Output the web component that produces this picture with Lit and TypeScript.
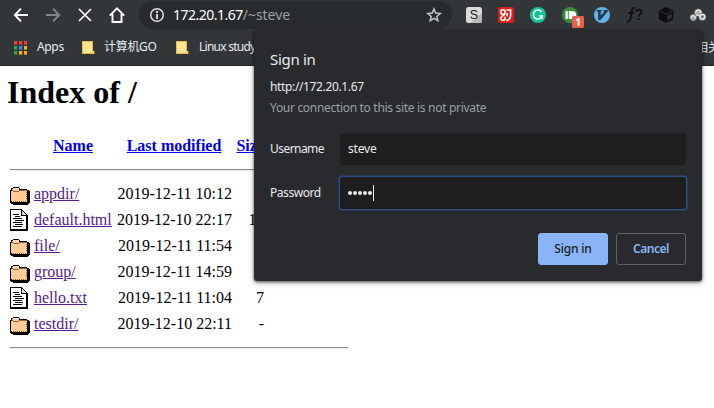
import { LitElement, html, css, svg } from "lit";
import { customElement } from "lit/decorators.js";

type Entry = { dir: boolean; name: string; date: string; size: string };

const ENTRIES: Entry[] = [
  { dir: true, name: "appdir/", date: "2019-12-11 10:12", size: "-" },
  { dir: false, name: "default.html", date: "2019-12-10 22:17", size: "11" },
  { dir: true, name: "file/", date: "2019-12-11 11:54", size: "-" },
  { dir: true, name: "group/", date: "2019-12-11 14:59", size: "-" },
  { dir: false, name: "hello.txt", date: "2019-12-11 11:04", size: "7" },
  { dir: true, name: "testdir/", date: "2019-12-10 22:11", size: "-" },
];

const UI = css`"Noto Sans", "Noto Sans CJK SC", sans-serif`;

@customElement("browser-toolbar")
class BrowserToolbar extends LitElement {
  static styles = css`
    :host { display: flex; align-items: center; height: 30px; background: #323639; font-family: ${UI}; }
    svg { display: block; flex: none; }
    .nav { display: flex; gap: 16px; margin-left: 13px; }
    .omnibox { display: flex; align-items: center; width: 313px; height: 28px; margin-left: 14px; border-radius: 14px;
      background: #282b2e; box-sizing: border-box; padding: 0 10px 0 10px; flex: none; color: #9aa0a6; font-size: 14px; }
    .url { flex: 1; margin-left: 8px; line-height: 28px; letter-spacing: -0.5px; white-space: nowrap; }
    .host { color: #fff; }
    .path { letter-spacing: -0.05px; }
    .ext { display: flex; gap: 16px; margin-left: 14px; }
  `;
  render() {
    return html`
      <div class="nav">
        <svg width="16" height="16" viewBox="0 0 16 16" fill="none" stroke="#fff" stroke-width="1.9"><path d="M15 8H2M8 1.6 1.8 8 8 14.4"/></svg>
        <svg width="16" height="16" viewBox="0 0 16 16" fill="none" stroke="#85888a" stroke-width="1.9"><path d="M1 8h13M8 1.6 14.2 8 8 14.4"/></svg>
        <svg width="16" height="16" viewBox="0 0 16 16" fill="none" stroke="#fff" stroke-width="1.7"><path d="m2 2 12 12M14 2 2 14"/></svg>
        <svg width="16" height="16" viewBox="0 0 16 16" fill="none" stroke="#fff" stroke-width="1.9"><path d="M.8 8.6 8 1.4l7.2 7.2M3.5 7v8h9V7"/></svg>
      </div>
      <div class="omnibox">
        <svg width="16" height="16" viewBox="0 0 16 16"><circle cx="8" cy="8" r="6.3" fill="none" stroke="#dfe1e3" stroke-width="1.5"/><path d="M7.1 7h1.8v5H7.1zM7.1 4h1.8v1.9H7.1z" fill="#e8eaed"/></svg>
        <div class="url"><span class="host">172.20.1.67</span><span class="path">/~steve</span></div>
        <svg width="16" height="16" viewBox="0 0 16 16" fill="none" stroke="#c2c5c8" stroke-width="1.5"><path d="m8 2 1.7 4.1 4.5.4-3.4 2.9 1 4.3L8 11.4l-3.8 2.3 1-4.3-3.4-2.9 4.5-.4z"/></svg>
      </div>
      <div class="ext">
        <svg width="16" height="16" viewBox="0 0 16 16"><rect width="16" height="16" rx="2.5" fill="#dadada"/><path d="M16 6v7.500a2.500 2.500 0 0 1-2.500 2.500H4z" fill="#b8b8b8"/><text x="8" y="12.300" font-size="12.500" font-family="Liberation Sans" text-anchor="middle" fill="#222">S</text></svg>
        <svg width="16" height="16" viewBox="0 0 16 16"><rect width="16" height="16" rx="2.500" fill="#df1f16"/><g fill="none" stroke="#fff" stroke-width="1.600" stroke-linecap="round"><path d="M9 3h3.600v5c0 3-1.200 4.800-3.600 5.400M9.300 6.500l-.2 2.300"/><circle cx="5" cy="5" r="2.300"/><path d="M6.500 7.500 4 9.300c-2 1.600-1.200 4 1 4 2.400 0 2.600-2 2-3"/></g></svg>
        <svg width="16" height="16" viewBox="0 0 16 16"><circle cx="8" cy="8" r="8" fill="#15c39a"/><path d="M11.600 5A4.500 4.500 0 1 0 12.200 9H9M12.200 8.400V12" fill="none" stroke="#fff" stroke-width="1.500"/></svg>
        <svg width="16" height="16" viewBox="0 0 16 16" overflow="visible"><circle cx="8" cy="8" r="8" fill="#388e3c"/><path d="M3.500 4h2.300v8H3.500zM6.800 4h3.400a4 4 0 0 1 0 8H6.800z" fill="#fff"/><rect x="10" y="9" width="12" height="12" rx="1.500" fill="#e8604c"/><text x="16" y="18.500" font-size="10" font-weight="700" font-family="Open Sans" text-anchor="middle" fill="#fff">1</text></svg>
        <svg width="16" height="16" viewBox="0 0 16 16"><circle cx="8" cy="8" r="8" fill="#63b1e5"/><path d="M2.700 3h5v1.500h-1v4L10.500 4.500h-1V3h4.300v1.500L6.500 13H4.200V4.500H2.700z" fill="#203a50"/></svg>
        <svg width="16" height="16" viewBox="0 0 16 16" overflow="visible" fill="none" stroke="#0d0f11" stroke-width="1.800"><path d="M9 1.300C6.600.3 6 2 5.600 4.500L4.600 11c-.4 2.700-1.600 4-4 3.200M2.300 6h5.700"/><path d="M10.500 5c.2-3.400 5-3.200 5 .1 0 2.400-2.800 2.100-2.800 4.600M12.600 11.200V13"/></svg>
        <svg width="16" height="16" viewBox="0 0 16 16"><path d="M8 0 15.300 3.700v8.600L8 16 .7 12.300V3.700z" fill="#0b0d0f"/><path d="M2 4.200 8 7.200l6-3" fill="none" stroke="#303437"/><path d="M9.300 8.500 13.700 6.300v4.900L9.300 13.500z" fill="#303437"/></svg>
        <svg width="16" height="16" viewBox="0 0 16 16"><g fill="#aaa" stroke="#777" stroke-width=".5"><circle cx="3.300" cy="10.500" r="3.200"/><circle cx="8.200" cy="5.600" r="3.700"/><circle cx="12.400" cy="10" r="3.500"/></g><g fill="none" stroke="#e4e4e4" stroke-width="1.200"><path d="M1 11c0-3.500 4-3 4.800.5M5.500 5.800c1-4 5.500-3 5.500.2M6.500 9c1-2 3-1 3.500 1.500"/><circle cx="12.400" cy="9.800" r="2.400"/></g><circle cx="12.400" cy="9.800" r="1" fill="#555"/></svg>
      </div>`;
  }
}

@customElement("bookmarks-bar")
class BookmarksBar extends LitElement {
  static styles = css`
    :host { display: flex; align-items: center; height: 36px; box-sizing: border-box; border-bottom: 1px solid #232527;
      background: #323639; color: #e8eaed; font: 12px/34px ${UI}; white-space: nowrap; padding-left: 14px; }
    svg { display: block; flex: none; }
    .item { display: flex; align-items: center; flex: none; }
    .apps { width: 68px; gap: 10px; letter-spacing: -0.35px; }
    .go { width: 94px; gap: 9px; letter-spacing: -0.3px; }
    .linux { gap: 10px; letter-spacing: -0.75px; flex: 1; }
    .tail { margin-right: -6px; }
    .item > span { margin-top: -1px; }
  `;
  folder() {
    return html`<svg width="13" height="15" viewBox="0 0 13 15"><path d="M0 1h11v10h1.500v3H0z" fill="#e2bd4d"/><path d="M1 2h9v11H1z" fill="#ffe492"/><path d="M10.500 11h1.500v2.500h-1.500z" fill="#ffd868"/></svg>`;
  }
  render() {
    const colors = ["#f23a32", "#f23a32", "#f23a32", "#2ba24c", "#4285f4", "#fbab08", "#2ba24c", "#fbab08", "#fbab08"];
    return html`
      <div class="item apps">
        <svg width="13" height="14" viewBox="0 0 13 14">${colors.map((c, i) => svg`<rect x=${(i % 3) * 5} y=${Math.floor(i / 3) * 5} width="3.200" height="3.600" fill=${c}/>`)}</svg>
        <span>Apps</span>
      </div>
      <div class="item go">${this.folder()}<span>计算机GO</span></div>
      <div class="item linux">${this.folder()}<span>Linux study</span></div>
      <span class="tail">相关</span>`;
  }
}

@customElement("directory-index")
class DirectoryIndex extends LitElement {
  static styles = css`
    :host { display: block; background: #fff; color: #000; font: 16px/26px "Liberation Serif", serif; padding: 8px 7px 0; }
    h1 { font-size: 32px; line-height: 37px; margin: 0 0 22px; }
    .table { width: 338px; margin-left: 3px; }
    .row { display: grid; grid-template-columns: 24px 78px 120px 32px 84px; height: 26px; white-space: nowrap; }
    .head { font-weight: 700; text-align: center; margin-bottom: 10px; }
    .head .date { text-align: center; padding-left: 4px; }
    a { color: #551a8b; text-decoration: underline; }
    .head a { color: #0000ee; }
    .date { text-align: right; }
    .size { text-align: right; }
    .row > svg { display: block; align-self: center; }
    .rule { border-top: 1px solid #8b8b8b; border-bottom: 1px solid #ededed; }
    .rows { padding: 10px 0 10px; }
  `;
  folder() {
    return html`<svg width="20" height="22" viewBox="0 0 20 22" shape-rendering="crispEdges">
      <path d="M3 4h6v1h1v1h7v1h2v1h1v12h-1v1h-1v1H3v-1H1v-1H0V7h1V5h2z" fill="#000"/>
      <path d="M3 5h6v1H3z" fill="#ffe5cc"/><path d="M2 6h7v1h8v12H2v-1H1V8h1z" fill="#ffcc99"/>
      <path d="M3 8h6v1H3zM9 7h8v1H9zM2 7h1v1H2z" fill="#996633"/>
      <path d="M3 18h1v1H3zm2 0h1v1H5zm2 0h1v1H7zm2 0h1v1H9zm2 0h1v1h-1zm2 0h1v1h-1zm2 0h1v1h-1zM16 9h1v1h-1zm0 2h1v1h-1zm0 2h1v1h-1zm0 2h1v1h-1z" fill="#996633"/></svg>`;
  }
  page() {
    return html`<svg width="20" height="22" viewBox="0 0 20 22" shape-rendering="crispEdges">
      <path d="M0 0h12v1h1v1h1v1h1v1h1v1h1v1h1v16H0z" fill="#000"/><path d="M1 1h10v6h5v13H1z" fill="#fff"/>
      <path d="M12 2v4h4V5h-1V4h-1V3h-1V2z" fill="#ddd"/>
      <path d="M3 5h6v1H3zm2 2h5v1H5zM3 9h9v1H3zm2 2h9v1H5zm-2 2h9v1H3zm2 2h8v1H5zm-2 2h9v1H3z" fill="#000"/></svg>`;
  }
  render() {
    return html`
      <h1>Index of /</h1>
      <div class="table">
        <div class="row head"><span></span><a>Name</a><span class="date"><a>Last modified</a></span><a class="size">Size</a></div>
        <div class="rule"></div>
        <div class="rows">${ENTRIES.map((e) => html`
          <div class="row">${e.dir ? this.folder() : this.page()}<span><a>${e.name}</a></span><span class="date">${e.date}</span><span class="size">${e.size}</span></div>`)}
        </div>
        <div class="rule"></div>
      </div>`;
  }
}

@customElement("sign-in-dialog")
class SignInDialog extends LitElement {
  static styles = css`
    :host { display: block; width: 448px; height: 251px; box-sizing: border-box; padding: 18px 16px 16px; border-radius: 3px; background: #292a2d;
      box-shadow: 0 1px 3px rgba(0,0,0,.6), 0 2px 6px rgba(0,0,0,.25); color: #e8eaed; font: 12px/20px ${UI}; white-space: nowrap; letter-spacing: -0.2px; }
    .title { font-size: 15px; line-height: 22px; letter-spacing: -0.3px; }
    .origin { margin-top: 7px; letter-spacing: -0.36px; }
    .note { color: #9aa0a6; letter-spacing: -0.31px; padding-top: 1px; }
    .field { display: flex; align-items: center; height: 32px; margin-bottom: 12px; }
    .first { margin-top: 15px; }
    .label { width: 70px; letter-spacing: -0.55px; }
    .label.pw { letter-spacing: -0.45px; }
    .input { display: flex; align-items: center; flex: 1; height: 32px; box-sizing: border-box; padding-left: 8px; border-radius: 2px; background: #1e1e1f; }
    .focus { box-shadow: 0 0 0 1.500px #2c4d86; }
    .dots { display: flex; gap: 1px; }
    .dot { width: 4px; height: 4px; border-radius: 50%; background: #e8eaed; }
    .caret { width: 1px; height: 16px; margin-left: 1px; background: #e8eaed; }
    .actions { display: flex; justify-content: flex-end; gap: 8px; margin-top: 24px; }
    .button { width: 70px; height: 32px; box-sizing: border-box; border: 1px solid #5f6368; border-radius: 3px; text-align: center; line-height: 30px; font-weight: 600; letter-spacing: -0.5px; color: #8ab4f8; }
    .primary { border-color: #8ab4f8; background: #8ab4f8; color: #202124; font-weight: 500; letter-spacing: -0.2px; }
  `;
  render() {
    return html`
      <div class="title">Sign in</div>
      <div class="origin">http://172.20.1.67</div>
      <div class="note">Your connection to this site is not private</div>
      <div class="field first"><span class="label">Username</span><span class="input">steve</span></div>
      <div class="field"><span class="label pw">Password</span><span class="input focus"><span class="dots">${[0, 1, 2, 3, 4].map(() => html`<i class="dot"></i>`)}</span><i class="caret"></i></span></div>
      <div class="actions"><div class="button primary">Sign in</div><div class="button">Cancel</div></div>`;
  }
}

@customElement("app-root")
class AppRoot extends LitElement {
  static styles = css`
    :host { display: block; position: relative; width: 714px; height: 408px; overflow: hidden; background: #fff; }
    .dialog { position: absolute; left: 254px; top: 30px; }
  `;
  render() {
    return html`
      <browser-toolbar></browser-toolbar>
      <bookmarks-bar></bookmarks-bar>
      <directory-index></directory-index>
      <sign-in-dialog class="dialog"></sign-in-dialog>`;
  }
}
